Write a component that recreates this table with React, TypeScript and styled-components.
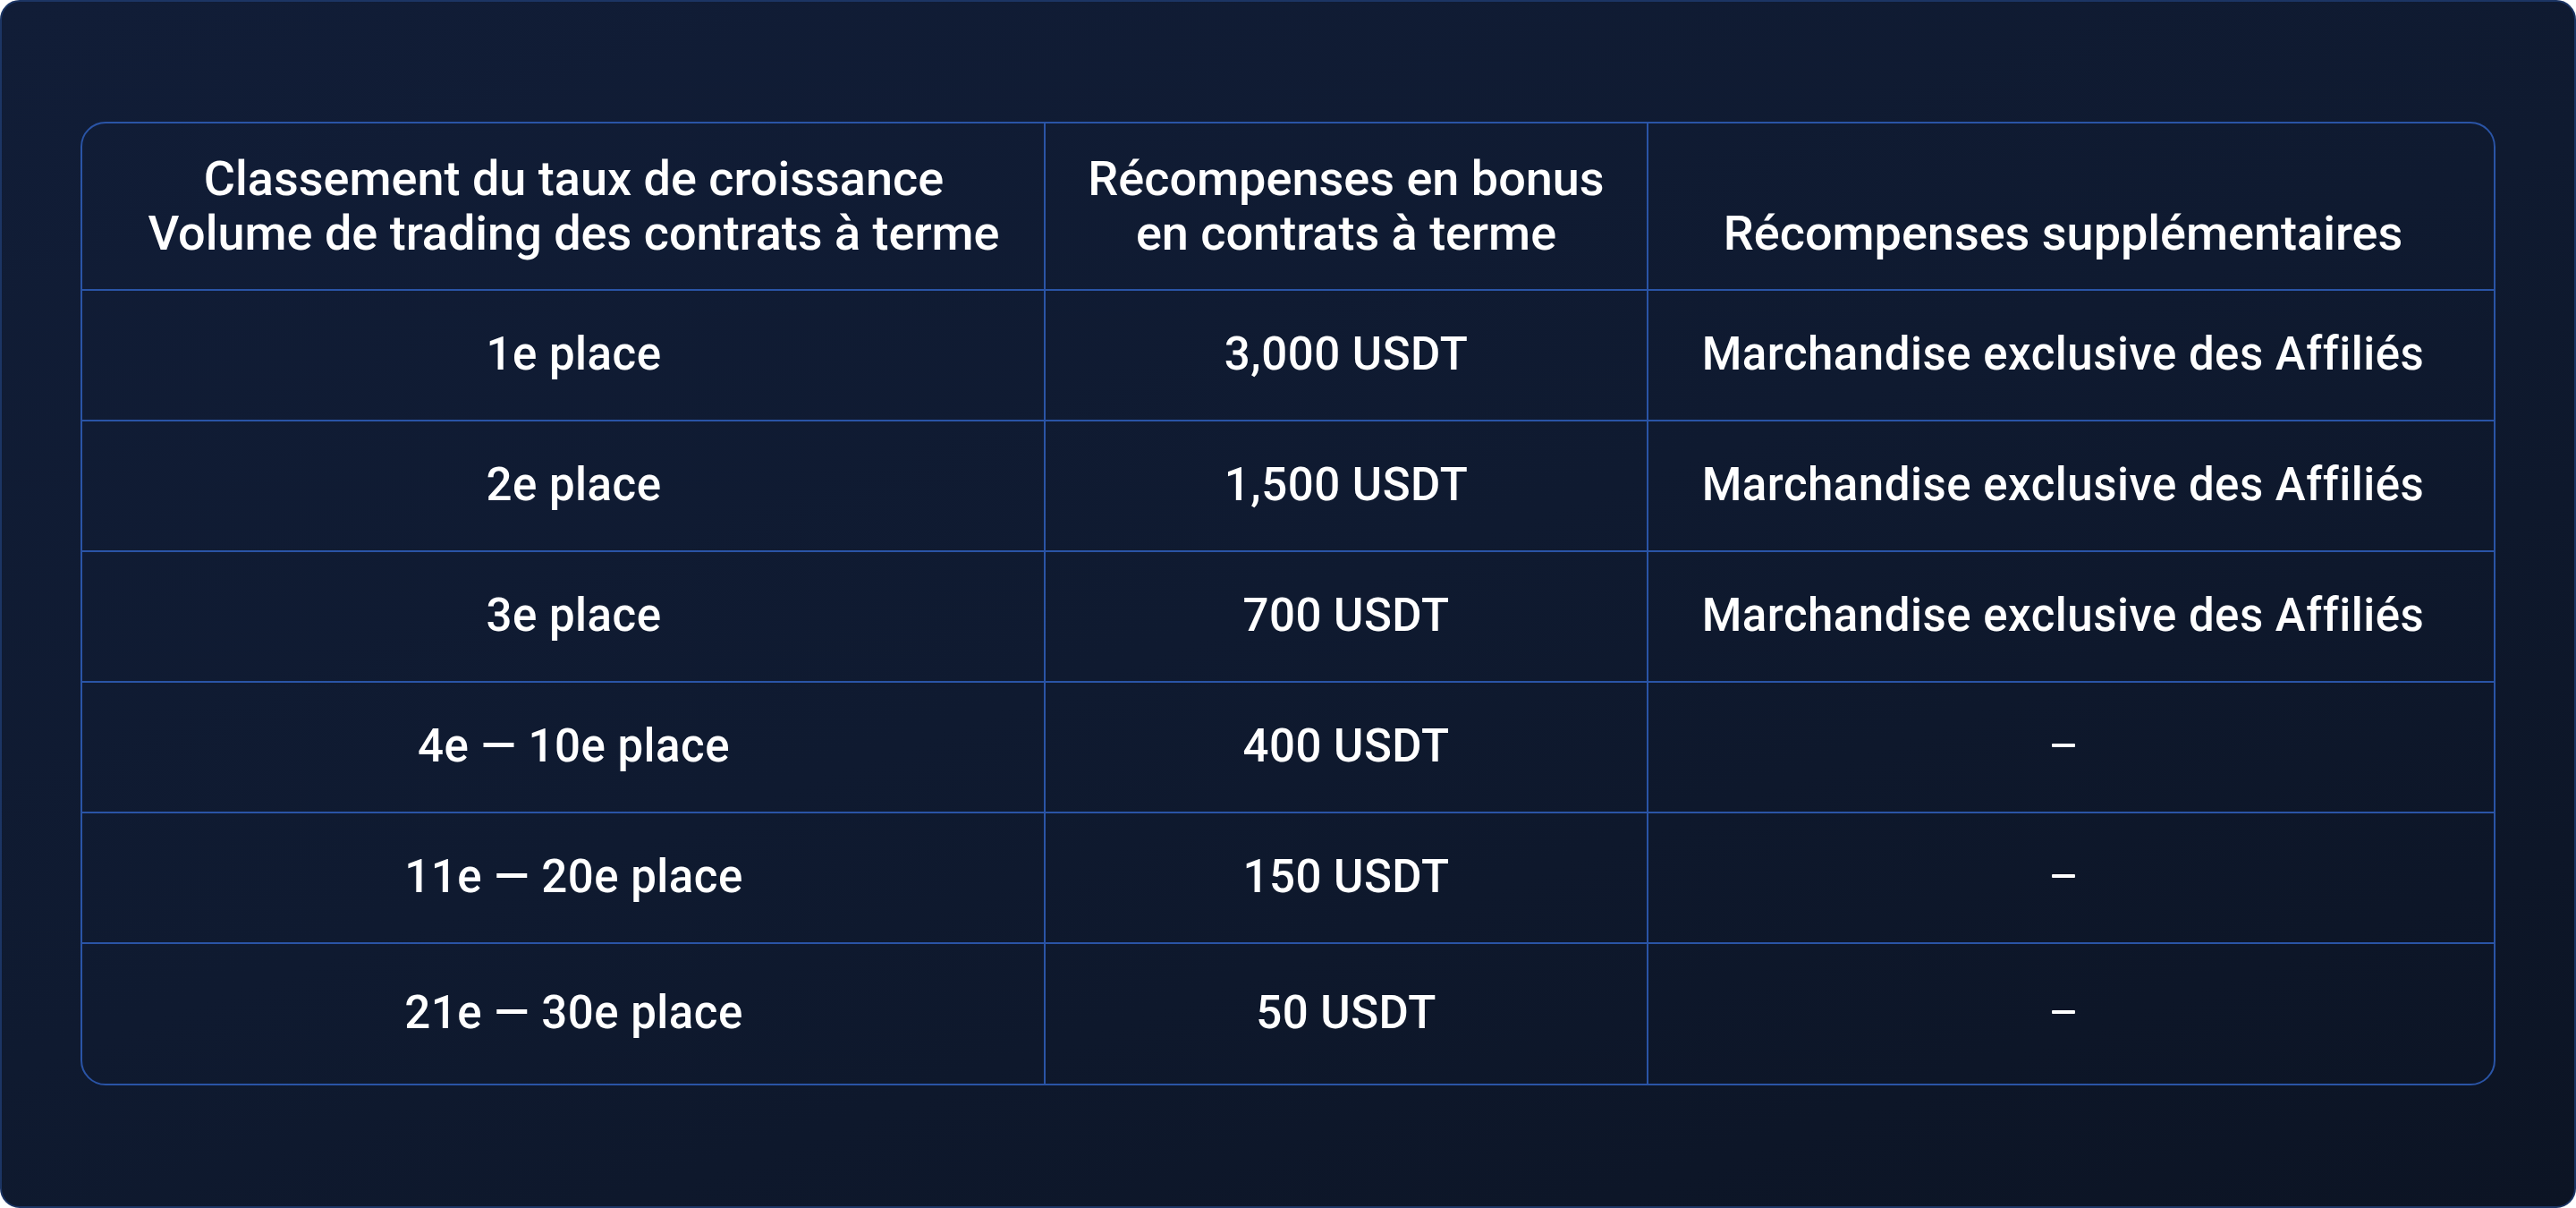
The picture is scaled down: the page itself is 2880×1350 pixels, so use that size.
import React from "react";
import styled, { createGlobalStyle } from "styled-components";

const GlobalStyle = createGlobalStyle`
  html, body {
    margin: 0;
    padding: 0;
    background: #ffffff;
  }
  * {
    box-sizing: border-box;
  }
`

const Panel = styled.div`
  width: 2880px;
  height: 1350px;
  padding: 134px 88px 0;
  border: 2px solid #1c3564;
  border-radius: 22px;
  background: linear-gradient(160deg, #111d37 0%, #0f1a30 50%, #0c1424 100%);
  font-family: Roboto, "Liberation Sans", sans-serif;
  color: #ffffff;
`

const Table = styled.div`
  display: grid;
  grid-template-columns: 1077px 674px 1fr;
  width: 2700px;
  border: 2px solid #2a54a6;
  border-radius: 28px;
  overflow: hidden;
`

// col: 0 = rank, 1 = bonus, 2 = extra rewards
const Cell = styled.div<{ $col: number; $bottom?: boolean }>`
  display: flex;
  align-items: center;
  justify-content: center;
  height: ${(p) => (p.$bottom ? "156px" : "146px")};
  padding-bottom: 4px;
  padding-left: ${(p) => (p.$col === 0 ? "24px" : "0")};
  padding-right: ${(p) => (p.$col === 2 ? "18px" : "0")};
  border-right: ${(p) => (p.$col === 2 ? "none" : "2px solid #2a54a6")};
  border-bottom: ${(p) => (p.$bottom ? "none" : "2px solid #2a54a6")};
  font-size: 51px;
  font-weight: 500;
  letter-spacing: 0.5px;
  text-align: center;
  white-space: nowrap;
`

const HeadCell = styled(Cell)`
  height: 187px;
  align-items: flex-end;
  padding-bottom: 32px;
  font-size: 54px;
  font-weight: 500;
  letter-spacing: 0;
  line-height: 61px;
`

const Dash = styled.span`
  display: inline-block;
  width: 26px;
  height: 4px;
  background: #ffffff;
  border-radius: 1px;
`

const headers = [
  ["Classement du taux de croissance", "Volume de trading des contrats à terme"],
  ["Récompenses en bonus", "en contrats à terme"],
  ["Récompenses supplémentaires"],
];

const rows = [
  { place: "1e place", bonus: "3,000 USDT", extra: "Marchandise exclusive des Affiliés" },
  { place: "2e place", bonus: "1,500 USDT", extra: "Marchandise exclusive des Affiliés" },
  { place: "3e place", bonus: "700 USDT", extra: "Marchandise exclusive des Affiliés" },
  { place: "4e — 10e place", bonus: "400 USDT", extra: null },
  { place: "11e — 20e place", bonus: "150 USDT", extra: null },
  { place: "21e — 30e place", bonus: "50 USDT", extra: null },
];

const App = () => {
  return (
    <>
      <GlobalStyle />
      <Panel>
        <Table>
          {headers.map((lines, i) => (
            <HeadCell key={i} $col={i}>
              <div>
                {lines.map((l) => (
                  <div key={l}>{l}</div>
                ))}
              </div>
            </HeadCell>
          ))}
          {rows.map((r, i) => {
            const bottom = i === rows.length - 1;
            return (
              <React.Fragment key={r.place}>
                <Cell $col={0} $bottom={bottom}>{r.place}</Cell>
                <Cell $col={1} $bottom={bottom}>{r.bonus}</Cell>
                <Cell $col={2} $bottom={bottom}>
                  {r.extra ? r.extra : <Dash />}
                </Cell>
              </React.Fragment>
            );
          })}
        </Table>
      </Panel>
    </>
  )
}

export default App;
